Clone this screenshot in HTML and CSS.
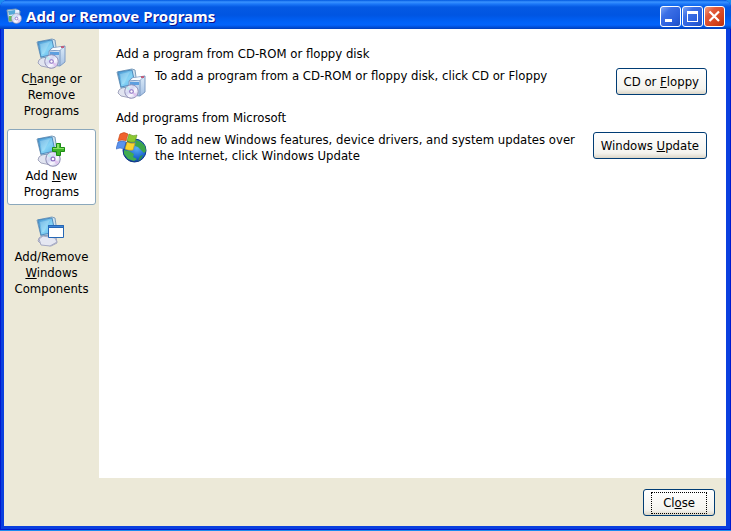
FILE: index.html
```html
<!DOCTYPE html>
<html lang="en">
<head>
<meta charset="utf-8">
<title>Add or Remove Programs</title>
<link rel="stylesheet" href="styles.css">
</head>
<body>
<svg class="defs" aria-hidden="true">
  <defs>
    <linearGradient id="screen" x1="0" y1="0" x2="1" y2="1">
      <stop offset="0" stop-color="#3f90d0"/><stop offset=".55" stop-color="#86d4f6"/><stop offset="1" stop-color="#58aee4"/>
    </linearGradient>
    <linearGradient id="case" x1="0" y1="0" x2="0" y2="1">
      <stop offset="0" stop-color="#dcebf8"/><stop offset="1" stop-color="#a4c0e4"/>
    </linearGradient>
    <linearGradient id="disc-fill" x1="0" y1="0" x2="1" y2="1">
      <stop offset="0" stop-color="#ffffff"/><stop offset=".4" stop-color="#d3d6f2"/><stop offset=".6" stop-color="#faf8ff"/><stop offset="1" stop-color="#b9b6e0"/>
    </linearGradient>
    <radialGradient id="ocean" cx=".6" cy=".4" r=".7">
      <stop offset="0" stop-color="#5bb0f6"/><stop offset=".6" stop-color="#1c66d0"/><stop offset="1" stop-color="#0a2e80"/>
    </radialGradient>
    <symbol id="computer" viewBox="0 0 32 32">
      <path d="M3 22 7 19 20 21 21 27 15 30 5 28 2 25z" fill="#e1e4f0" stroke="#a3a6be"/>
      <path d="M1 4 16 1 19 2 21 16 19 18 5 20z" fill="#cfe2f0" stroke="#7c9cba"/>
      <path d="M2 4 16 2 19 16 5 19z" fill="url(#screen)" stroke="#4d8cbe"/>
      <path d="M4 6 14 4 8 16 6 16z" fill="#c9eefc" opacity=".35"/>
    </symbol>
    <symbol id="disc" viewBox="0 0 14 14">
      <circle cx="7" cy="7" r="6.3" fill="url(#disc-fill)" stroke="#8f8eb4" stroke-width=".9"/>
      <path d="M7 7 1.6 4.4A6 6 0 0 1 4 1.9z" fill="#c4e8f2"/>
      <path d="M7 7 12.4 9.6A6 6 0 0 1 10 12z" fill="#dfc4ee"/>
      <circle cx="7" cy="7" r="1.7" fill="#fff" stroke="#8a6cc0"/>
    </symbol>
    <symbol id="software" viewBox="0 0 32 32">
      <use href="#computer" width="32" height="32"/>
      <path d="M13 13 16 10 29 8 29 24 24 28 13 27z" fill="url(#case)" stroke="#7e9cc4"/>
      <path d="M13 13 24 12 29 8M24 12V28" fill="none" stroke="#7e9cc4"/>
      <path d="M15 12 17 10 27 9 24 12z" fill="#f8fcff"/>
      <path d="M25 8h3v2h-3z" fill="#c0607c"/>
      <path d="M14 14h9v3h-9z" fill="#5d9fe0"/>
      <use href="#disc" x="8" y="16" width="15" height="15"/>
    </symbol>
    <symbol id="add-software" viewBox="0 0 32 32">
      <use href="#computer" width="32" height="32"/>
      <use href="#disc" x="9" y="16" width="16" height="16"/>
      <path d="M20.500 8.500h4v4h4v4h-4v4h-4v-4h-4v-4h4z" fill="#3fb52a" stroke="#1b8d14"/>
      <path d="M21 9h2v4h5v1h-11v-1h4z" fill="#8ae063"/>
    </symbol>
    <symbol id="components" viewBox="0 0 32 32">
      <use href="#computer" width="32" height="32"/>
      <path d="M3 23 7 20 19 22 21 26 14 30 5 29z" fill="#e5e7f2" stroke="#a6aac4"/>
      <path d="M12.500 9.500h15v12h-15z" fill="#fff" stroke="#2667b5"/>
      <path d="M12.500 9.500h15v2h-15z" fill="#3f86d8" stroke="#2667b5"/>
    </symbol>
    <symbol id="update" viewBox="0 0 32 32">
      <circle cx="18.500" cy="18.500" r="11.500" fill="url(#ocean)" stroke="#123b86"/>
      <path d="M20 8 25 10 29 14 30 19 28 21 25 18 22 15 19 14z" fill="#3da64a"/>
      <path d="M8 18 13 19 18 22 17 25 21 27 18 29 12 27 8 22z" fill="#41ac50"/>
      <path d="M24 24 27 23 25 27 22 29z" fill="#2c9150"/>
      <path d="M4 2Q8 -1 12 2L10 9Q6 7 2 9z" fill="#f0622c" stroke="#c34112" stroke-width=".6"/>
      <path d="M13 2Q17 5 21 3L19 10Q15 11 11 9z" fill="#8cc832" stroke="#5b9418" stroke-width=".6"/>
      <path d="M2 10Q6 8 10 10L8 17Q4 15 0 17z" fill="#5b93ee" stroke="#2b5fc0" stroke-width=".6"/>
      <path d="M11 10Q15 12 19 11L17 18Q13 19 9 17z" fill="#fbd430" stroke="#c99a10" stroke-width=".6"/>
    </symbol>
  </defs>
</svg>
<div class="window">
  <header class="titlebar">
    <svg class="title-icon" viewBox="0 0 16 16" aria-hidden="true">
      <path d="M1 2 10 1 14 3 13 13 3 14z" fill="#d5e8f4" stroke="#789ab8"/>
      <path d="M2 3 9 2 9 6 3 7z" fill="#55a8d8"/>
      <path d="M10 2h3v2h-3z" fill="#eef"/>
      <path d="M3 8h4v5H3z" fill="#65b95a"/>
      <use href="#disc" x="5" y="5" width="11" height="11"/>
    </svg>
    <h1>Add or Remove Programs</h1>
    <div class="controls">
      <button class="control" type="button" aria-label="Minimize"><svg viewBox="0 0 19 19"><path d="M4 12h7v3H4z" fill="#fff"/></svg></button>
      <button class="control" type="button" aria-label="Maximize"><svg viewBox="0 0 19 19"><path d="M4 4h11v11H4zM5 7v7h9V7z" fill="#fff" fill-rule="evenodd"/></svg></button>
      <button class="control control-close" type="button" aria-label="Close window"><svg viewBox="0 0 19 19"><path d="M4.500 4.500 14 14M14 4.500 4.500 14" stroke="#fff" stroke-width="2.200"/></svg></button>
    </div>
  </header>
  <div class="workspace">
    <nav class="sidebar">
      <button class="task" type="button"><svg class="icon"><use href="#software"/></svg><span>C<u>h</u>ange or<br>Remove<br>Programs</span></button>
      <button class="task task-selected" type="button"><svg class="icon"><use href="#add-software"/></svg><span>Add <u>N</u>ew<br>Programs</span></button>
      <button class="task" type="button"><svg class="icon"><use href="#components"/></svg><span>Add/Remove<br><u>W</u>indows<br>Components</span></button>
    </nav>
    <main class="content">
      <section>
        <h2>Add a program from CD-ROM or floppy disk</h2>
        <div class="source">
          <svg class="icon"><use href="#software"/></svg>
          <p>To add a program from a CD-ROM or floppy disk, click CD or Floppy</p>
          <button class="button" type="button">CD or <u>F</u>loppy</button>
        </div>
      </section>
      <section>
        <h2>Add programs from Microsoft</h2>
        <div class="source">
          <svg class="icon"><use href="#update"/></svg>
          <p>To add new Windows features, device drivers, and system updates over the Internet, click Windows Update</p>
          <button class="button" type="button">Windows <u>U</u>pdate</button>
        </div>
      </section>
    </main>
  </div>
  <footer class="footer">
    <button class="button" type="button"><span class="focus">Cl<u>o</u>se</span></button>
  </footer>
</div>
</body>
</html>
```
FILE: styles.css
```css
* { box-sizing: border-box; }

body {
  margin: 0;
  background: #1c8cf0;
  color: #000;
  font: 13px/16px "DejaVu Sans Condensed", "DejaVu Sans", sans-serif;
}

button { font: inherit; color: inherit; margin: 0; }

h1, h2, p { margin: 0; font-size: inherit; font-weight: normal; }

.defs { position: absolute; width: 0; height: 0; }

.window {
  display: flex;
  flex-direction: column;
  min-height: calc(100vh - 1px);
  padding: 0 5px 4px 4px;
  box-shadow: inset 0 0 0 1px #0019cf;
  border-radius: 8px 8px 0 0;
  background:
    linear-gradient(#ece9d8, #ece9d8) content-box,
    #0a3fdf;
}

.titlebar {
  display: flex;
  align-items: center;
  height: 29px;
  margin: 0 -5px 0 -4px;
  padding: 3px 6px 0;
  border-radius: 8px 8px 0 0;
  background: linear-gradient(#0058e0 0, #3a93ff 2px, #1c78f8 4px, #0459e3 7px, #0055e2 15px, #0062f8 22px, #0364fb 25px, #0047cc 28px, #0040b8 29px);
}

.title-icon { width: 16px; height: 16px; }

.titlebar h1 {
  flex: 1;
  margin-left: 4px;
  color: #fff;
  font: bold 15px/20px "Noto Sans", "DejaVu Sans", sans-serif;
  text-shadow: 1px 1px #0f1089;
}

.controls { display: flex; gap: 1px; }

.control {
  width: 21px;
  height: 21px;
  padding: 0;
  border: 1px solid #fff;
  border-radius: 3px;
  background: linear-gradient(135deg, #7ea6f5, #3c6fe6 30%, #2a5fdc 70%, #1f4fc0);
}

.control svg { display: block; width: 19px; height: 19px; }

.control-close { background: linear-gradient(135deg, #f0a080, #e2593a 30%, #d4431c 70%, #b83010); }

.workspace { flex: 1; display: flex; }

.sidebar {
  display: flex;
  flex-direction: column;
  gap: 5px;
  flex: 0 0 95px;
  padding: 3px;
}

.task {
  display: flex;
  flex-direction: column;
  align-items: center;
  gap: 1px;
  padding: 5px 0 4px;
  border: 1px solid transparent;
  border-radius: 3px;
  background: none;
  text-align: center;
  white-space: nowrap;
}

.task-selected { background: #fff; border-color: #8ba8bc; }

.icon { flex: none; width: 32px; height: 32px; }

.content {
  flex: 1;
  display: flex;
  flex-direction: column;
  gap: 10px;
  padding: 17px 19px 16px 17px;
  background: #fff;
}

.source { display: flex; align-items: flex-start; margin-top: 6px; }

.source .icon { margin-right: 7px; }

.source p { flex: 1; margin-right: 10px; }

.button {
  height: 27px;
  padding: 0 7px;
  border: 1px solid #003c74;
  border-radius: 3px;
  background: linear-gradient(#fff, #f4f3ee 80%, #dcd6c8);
  white-space: nowrap;
}

.footer {
  display: flex;
  justify-content: flex-end;
  padding: 11px 11px 10px;
}

.focus { display: block; padding: 2px 11px; border: 1px dotted #000; }
```
